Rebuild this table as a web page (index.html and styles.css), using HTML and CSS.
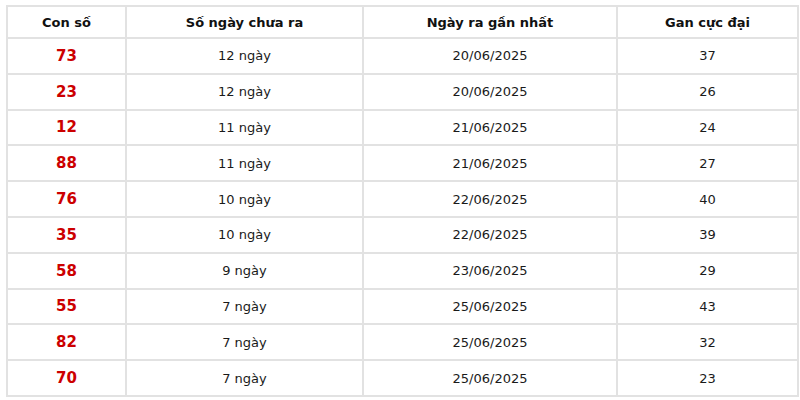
FILE: index.html
```html
<!DOCTYPE html>
<html lang="vi">
<head>
<meta charset="utf-8">
<link rel="stylesheet" href="styles.css">
</head>
<body>
<table class="gan">
  <colgroup>
    <col class="c1"><col class="c2"><col class="c3"><col class="c4">
  </colgroup>
  <thead>
    <tr><th>Con số</th><th>Số ngày chưa ra</th><th>Ngày ra gần nhất</th><th>Gan cực đại</th></tr>
  </thead>
  <tbody>
    <tr><td class="num">73</td><td>12 ngày</td><td>20/06/2025</td><td>37</td></tr>
    <tr><td class="num">23</td><td>12 ngày</td><td>20/06/2025</td><td>26</td></tr>
    <tr><td class="num">12</td><td>11 ngày</td><td>21/06/2025</td><td>24</td></tr>
    <tr><td class="num">88</td><td>11 ngày</td><td>21/06/2025</td><td>27</td></tr>
    <tr><td class="num">76</td><td>10 ngày</td><td>22/06/2025</td><td>40</td></tr>
    <tr><td class="num">35</td><td>10 ngày</td><td>22/06/2025</td><td>39</td></tr>
    <tr><td class="num">58</td><td>9 ngày</td><td>23/06/2025</td><td>29</td></tr>
    <tr><td class="num">55</td><td>7 ngày</td><td>25/06/2025</td><td>43</td></tr>
    <tr><td class="num">82</td><td>7 ngày</td><td>25/06/2025</td><td>32</td></tr>
    <tr><td class="num">70</td><td>7 ngày</td><td>25/06/2025</td><td>23</td></tr>
  </tbody>
</table>
</body>
</html>
```
FILE: styles.css
```css
html, body {
  margin: 0;
  padding: 0;
  background: #fff;
}
body {
  padding: 5px 3px 0 6px;
  font-family: "DejaVu Sans", Verdana, sans-serif;
  font-size: 13px;
  color: #1a1a1a;
}
.gan {
  width: 791px;
  border-collapse: collapse;
  table-layout: fixed;
}
.c1 { width: 119px; }
.c2 { width: 237px; }
.c3 { width: 254px; }
.c4 { width: 181px; }
.gan th, .gan td {
  border: 2px solid #e2e2e2;
  text-align: center;
  padding: 0;
}
.gan th {
  height: 30px;
  font-weight: bold;
  color: #111;
}
.gan td {
  height: 33.8px;
}
.gan td.num {
  color: #cc0000;
  font-weight: bold;
  font-size: 15px;
}
```
